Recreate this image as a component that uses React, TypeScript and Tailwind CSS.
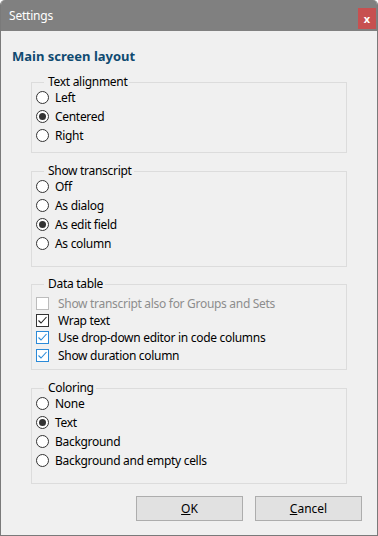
import type { ReactNode } from 'react'

const font = { fontFamily: '"Noto Sans", "Open Sans", sans-serif' }

type Opt = { label: string; checked?: boolean }

const alignment: Opt[] = [{ label: 'Left' }, { label: 'Centered', checked: true }, { label: 'Right' }]
const transcript: Opt[] = [
  { label: 'Off' },
  { label: 'As dialog' },
  { label: 'As edit field', checked: true },
  { label: 'As column' },
]
const coloring: Opt[] = [
  { label: 'None' },
  { label: 'Text', checked: true },
  { label: 'Background' },
  { label: 'Background and empty cells' },
]

function Radio({ label, checked }: Opt) {
  return (
    <div className="flex h-[19px] items-center">
      <span className="ml-[4px] flex h-[13px] w-[13px] shrink-0 items-center justify-center rounded-full border border-[#333333] bg-white">
        {checked && <span className="h-[7px] w-[7px] rounded-full bg-[#333333]" />}
      </span>
      <span className="ml-[6px] text-[12px] tracking-[-0.3px] text-black">{label}</span>
    </div>
  )
}

function Check({
  label,
  tone,
  className = '',
}: {
  label: string
  tone: 'disabled' | 'dark' | 'blue'
  className?: string
}) {
  const box =
    tone === 'disabled' ? 'border-[#bcbcbc]' : tone === 'dark' ? 'border-[#333333]' : 'border-[#2b8ad8]'
  const stroke = tone === 'dark' ? '#222222' : '#2b8ad8'
  return (
    <div className={`flex h-[17px] items-center ${className}`}>
      <span className={`ml-[4px] flex h-[13px] w-[13px] shrink-0 items-center justify-center border bg-white ${box}`}>
        {tone !== 'disabled' && (
          <svg width="11" height="11" viewBox="0 0 11 11">
            <polyline points="1.5,5.5 4,8 9.5,2" fill="none" stroke={stroke} strokeWidth="1.1" />
          </svg>
        )}
      </span>
      <span
        className={`ml-[9px] text-[12px] tracking-[-0.3px] ${tone === 'disabled' ? 'text-[#8d8d8d]' : 'text-black'}`}
      >
        {label}
      </span>
    </div>
  )
}

function Group({ title, className, children }: { title: string; className: string; children: ReactNode }) {
  return (
    <div className={`relative mx-[30px] border border-[#dcdcdc] ${className}`}>
      <span className="absolute -top-[10px] left-[12px] bg-[#f0f0f0] pl-[4px] pr-[2px] text-[12px] leading-[18px] tracking-[-0.3px] text-black">
        {title}
      </span>
      {children}
    </div>
  )
}

export default function App() {
  return (
    <div className="h-[536px] w-[378px] bg-white" style={font}>
      <div className="flex h-[536px] flex-col overflow-hidden rounded-t-[5px] border-x border-b border-[#7a7a7a] bg-[#f0f0f0]">
        <div className="-mx-px flex h-[31px] shrink-0 items-start justify-between bg-[#808080]">
          <span className="ml-[9px] mt-[7px] text-[12px] leading-[17px] tracking-[-0.2px] text-white">Settings</span>
          <span className="mr-[2px] mt-[8px] flex h-[21px] w-[18px] items-center justify-center bg-[#c75050] text-[11px] font-bold leading-none text-white">
            x
          </span>
        </div>

        <h1 className="ml-[11px] mt-[15px] h-[20px] text-[13px] font-bold leading-[20px] text-[#0f4a70]">
          Main screen layout
        </h1>

        <Group title="Text alignment" className="mt-[16px] h-[71px] pt-[5px]">
          {alignment.map((o) => (
            <Radio key={o.label} {...o} />
          ))}
        </Group>

        <Group title="Show transcript" className="mt-[18px] h-[96px] pt-[5px]">
          {transcript.map((o) => (
            <Radio key={o.label} {...o} />
          ))}
        </Group>

        <Group title="Data table" className="mt-[17px] h-[86px] pt-[10px]">
          <Check label="Show transcript also for Groups and Sets" tone="disabled" />
          <Check label="Wrap text" tone="dark" />
          <Check label="Use drop-down editor in code columns" tone="blue" />
          <Check label="Show duration column" tone="blue" className="mt-[1px]" />
        </Group>

        <Group title="Coloring" className="mt-[18px] h-[96px] pt-[5px]">
          {coloring.map((o) => (
            <Radio key={o.label} {...o} />
          ))}
        </Group>

        <div className="mr-[15px] mt-[12px] flex justify-end gap-[12px]">
          <button className="h-[25px] w-[107px] border border-[#adadad] bg-[#e1e1e1] text-[12px] text-black">
            <span className="underline underline-offset-1">O</span>K
          </button>
          <button className="h-[25px] w-[107px] border border-[#adadad] bg-[#e1e1e1] text-[12px] text-black">
            <span className="underline underline-offset-1">C</span>ancel
          </button>
        </div>
      </div>
    </div>
  )
}
